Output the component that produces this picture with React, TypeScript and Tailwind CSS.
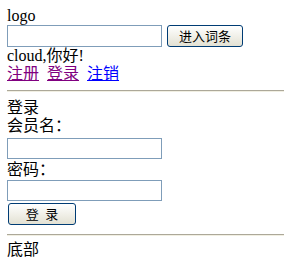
export default function App() {
  const font = { fontFamily: '"Liberation Serif", "Noto Sans CJK SC", serif' }
  const btn =
    "h-[22px] rounded-[3px] border border-[#003c74] bg-gradient-to-b from-white to-[#e3e1d3] text-[13px] leading-none text-black"

  return (
    <div className="min-h-[263px] w-[284px] bg-white pt-[7px] text-[16px] leading-[18px] text-black" style={font}>
      <div className="px-[7px]">
        <div>logo</div>
        <div className="flex h-[22px] items-center gap-[5px]">
          <input className="h-[22px] w-[155px] border border-[#7f9db9] bg-white outline-none" />
          <button className={`${btn} w-[76px]`}>进入词条</button>
        </div>
        <div>cloud,你好!</div>
        <div className="flex gap-[8px]">
          <a className="text-[#800080] underline">注册</a>
          <a className="text-[#800080] underline">登录</a>
          <a className="text-[#0000ff] underline">注销</a>
        </div>
      </div>

      <div className="my-[7px] ml-[7px] h-[2px] border-t border-b border-t-[#aca899] border-b-[#f1efe2]" />

      <div className="px-[7px]">
        <div>登录</div>
        <div>会员名：</div>
        <input className="mt-[3px] block h-[21px] w-[155px] border border-[#7f9db9] bg-white outline-none" />
        <div className="mt-[2px]">密码：</div>
        <input className="mt-[1px] block h-[21px] w-[155px] border border-[#7f9db9] bg-white outline-none" />
        <button className={`${btn} ml-[1px] mt-[2px] block w-[68px]`}>登&nbsp;&nbsp;录</button>
      </div>

      <div className="mb-[5px] ml-[7px] mt-[9px] h-[2px] border-t border-b border-t-[#aca899] border-b-[#f1efe2]" />

      <div className="px-[7px]">底部</div>
    </div>
  )
}
